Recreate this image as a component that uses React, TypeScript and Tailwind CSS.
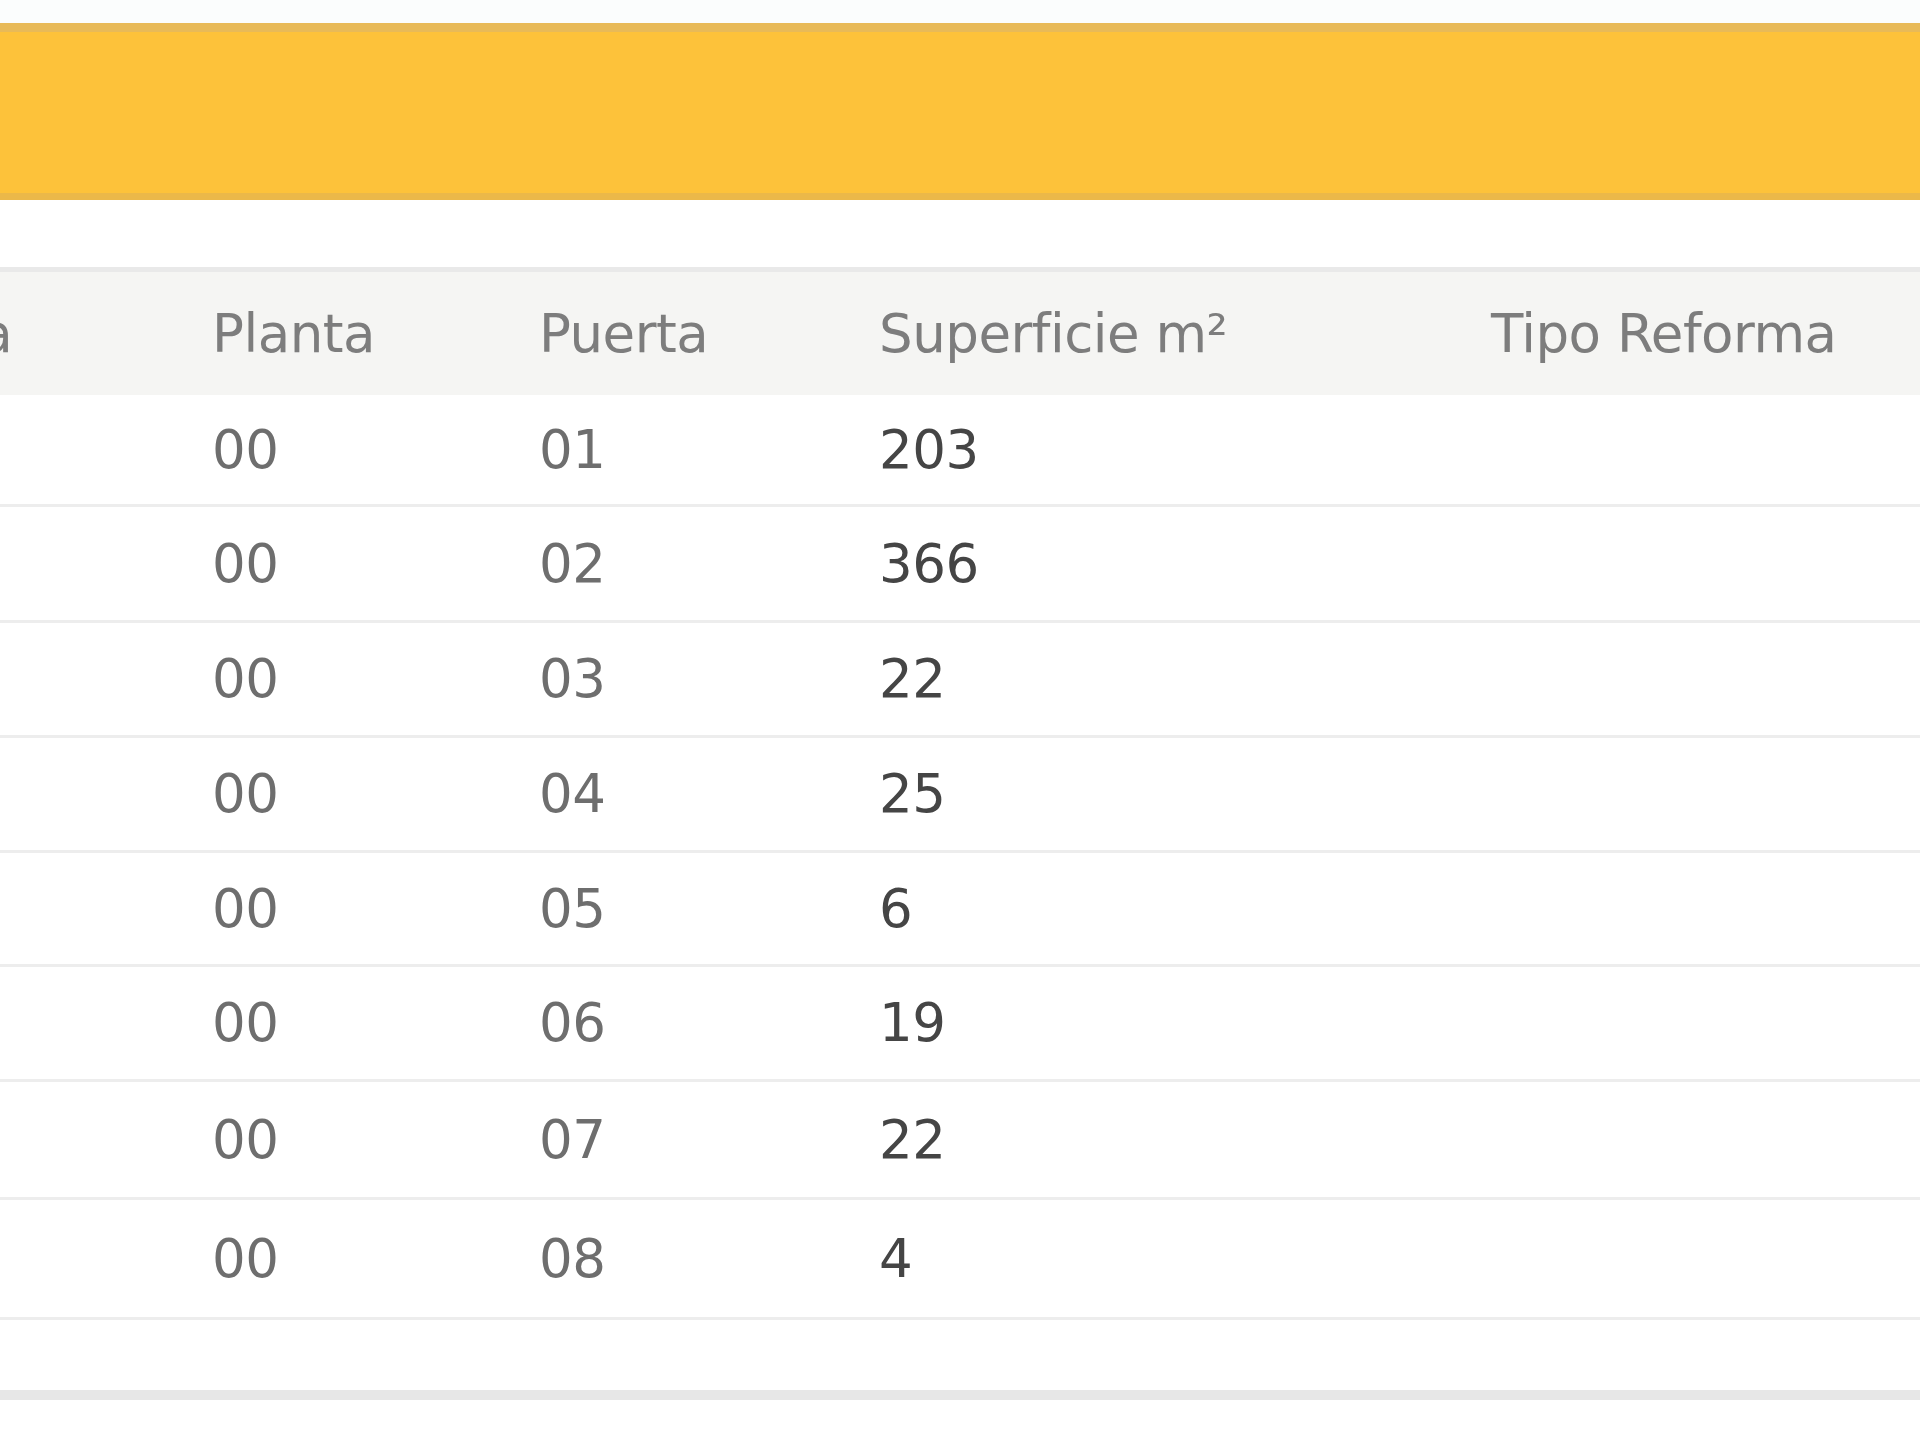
import React from 'react';

const rows = [
  { planta: '00', puerta: '01', sup: '203', h: 'h-[112px]' },
  { planta: '00', puerta: '02', sup: '366', h: 'h-[116px]' },
  { planta: '00', puerta: '03', sup: '22', h: 'h-[115px]' },
  { planta: '00', puerta: '04', sup: '25', h: 'h-[115px]' },
  { planta: '00', puerta: '05', sup: '6', h: 'h-[114px]' },
  { planta: '00', puerta: '06', sup: '19', h: 'h-[115px]' },
  { planta: '00', puerta: '07', sup: '22', h: 'h-[118px]' },
  { planta: '00', puerta: '08', sup: '4', h: 'h-[120px]' },
];

// the screenshot is cropped: the first column (Escalera) sits mostly off the left edge
const cols = 'grid grid-cols-[420px_327px_340px_612px_1fr] -ml-[208px] items-center';

const App = () => {
  return (
    <div className="h-[1443px] w-full overflow-hidden bg-white font-['DejaVu_Sans',sans-serif] text-[53px] tracking-[-0.5px]">
      <div className="h-[23px] bg-[#fbfdfd]" />
      <div className="h-[177px] border-t-[9px] border-b-[7px] border-t-[#e8ba58] border-b-[#ebb849] bg-[#fdc23a]" />
      <div className="h-[67px] bg-white" />

      <div className={`${cols} h-[128px] border-t-[5px] border-[#e9e9e9] bg-[#f5f5f3] text-[#7d7d7d]`}>
        <span className="whitespace-nowrap">Escalera</span>
        <span>Planta</span>
        <span>Puerta</span>
        <span className="whitespace-nowrap">Superficie m²</span>
        <span className="whitespace-nowrap">Tipo Reforma</span>
      </div>

      {rows.map((r) => (
        <div key={r.puerta} className={`${cols} ${r.h} border-b-[3px] border-[#ededed]`}>
          <span />
          <span className="text-[#6e6e6e]">{r.planta}</span>
          <span className="text-[#6e6e6e]">{r.puerta}</span>
          <span className="text-[#454545]">{r.sup}</span>
          <span />
        </div>
      ))}

      <div className="h-[70px]" />
      <div className="h-[10px] bg-[#e7e7e7]" />
    </div>
  );
};

export default App;
